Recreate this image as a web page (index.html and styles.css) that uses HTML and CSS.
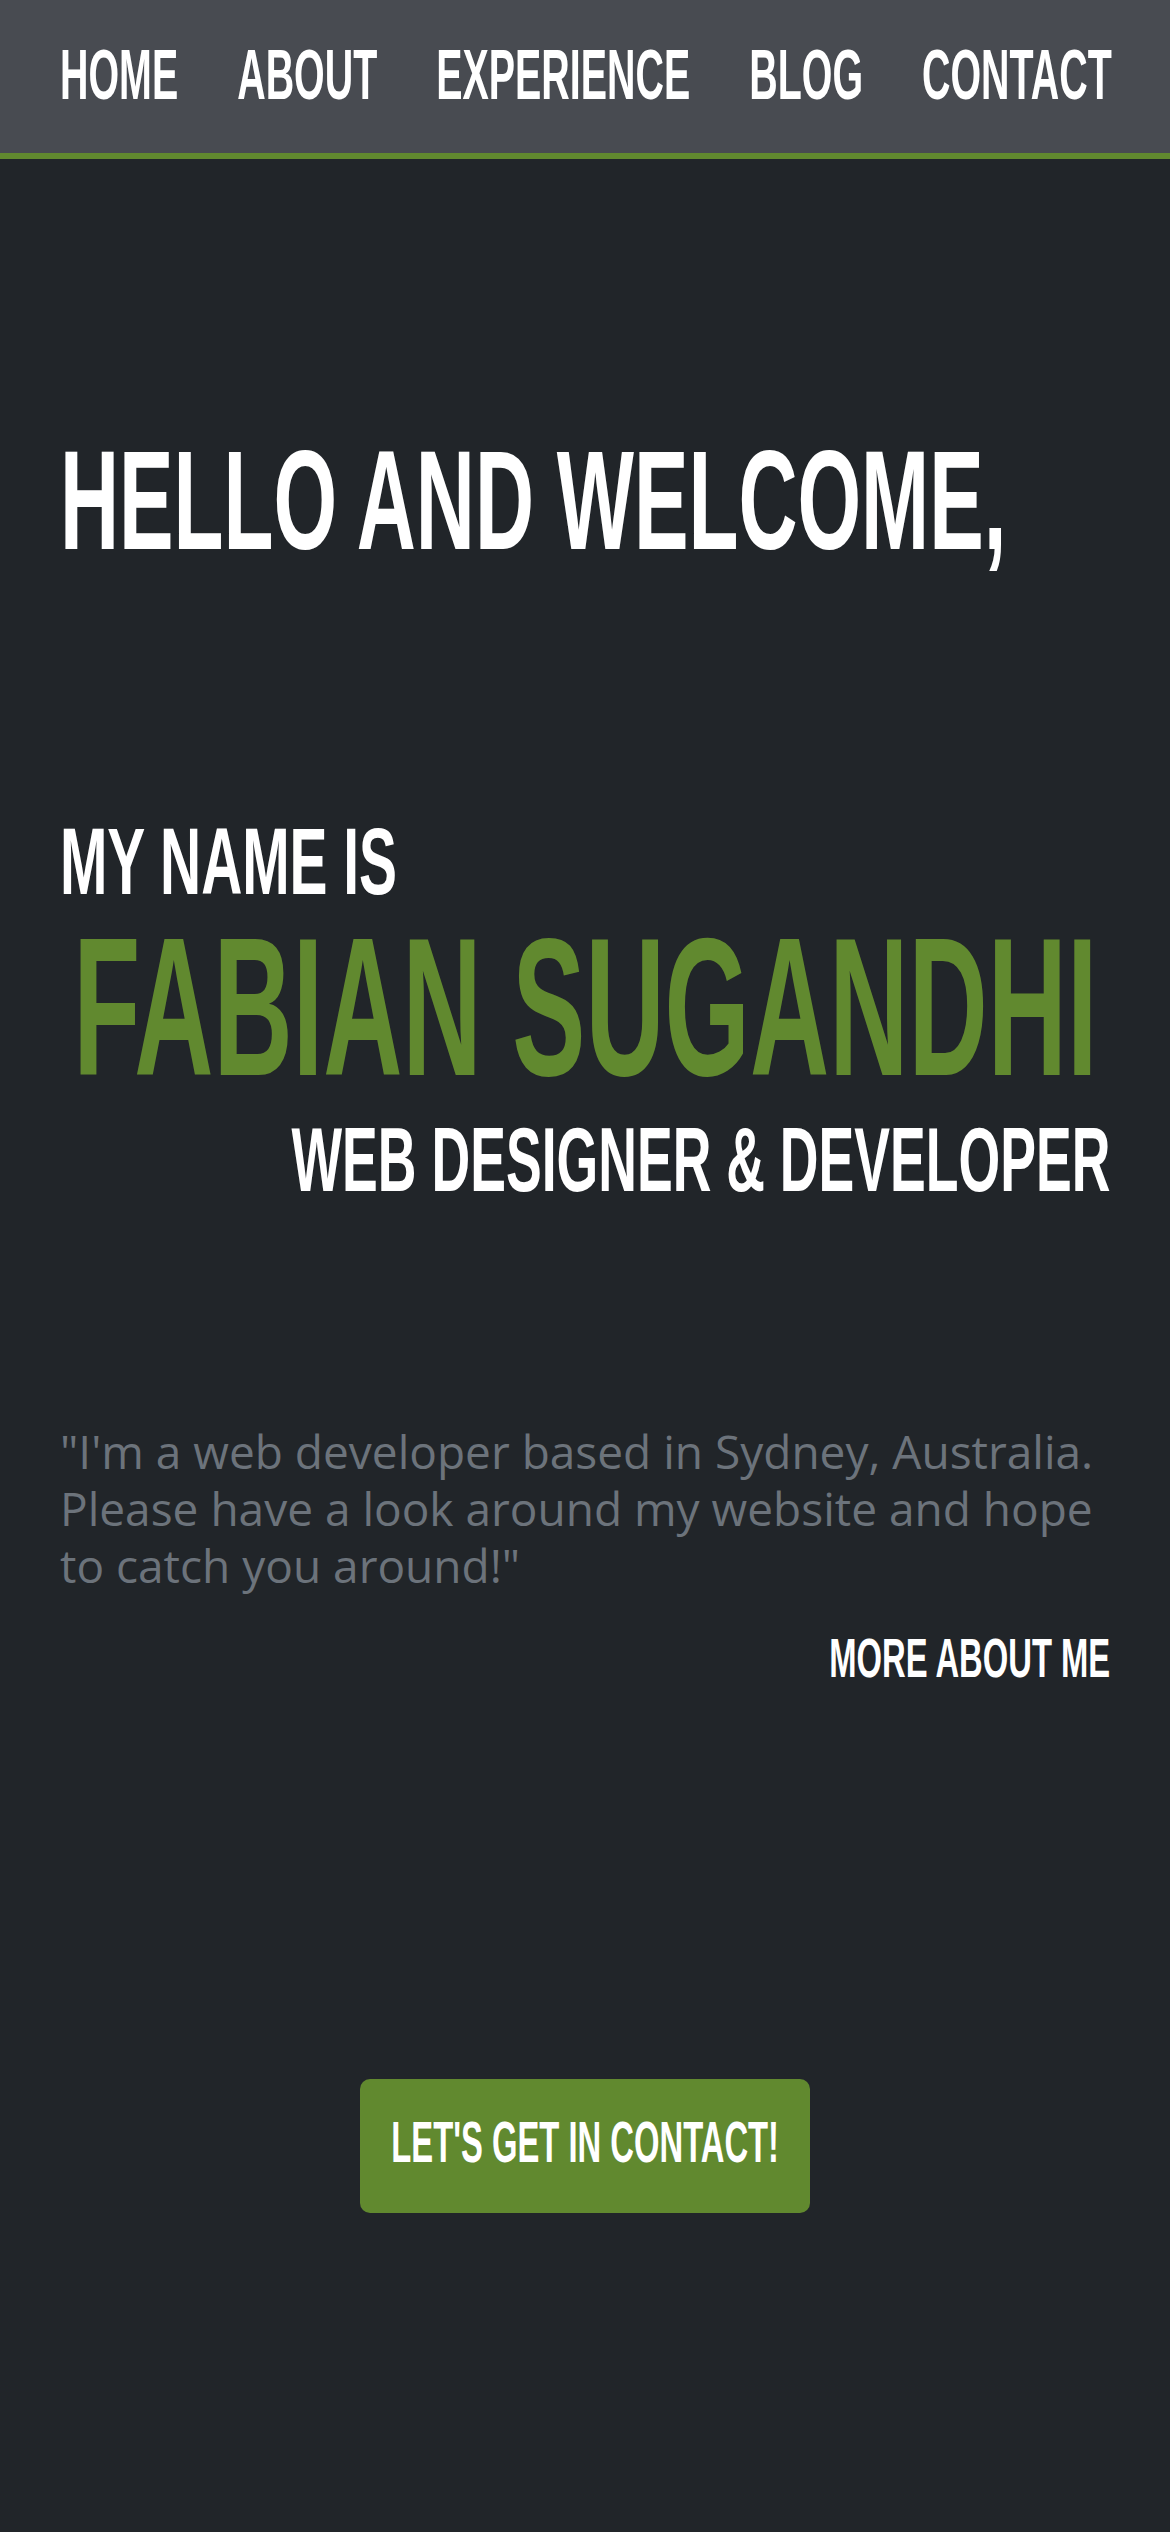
FILE: index.html
```html
<!DOCTYPE html>
<html lang="en">
  <head>
    <meta charset="UTF-8" />
    <meta name="viewport" content="width=device-width, initial-scale=1.0" />
    <title>Fabian Sugandhi</title>
    <link rel="stylesheet" href="styles.css">
  </head>
  <body>
    <header class="topnav">
      <nav class="nav-row">
        <a href="#" class="nav-link">HOME</a>
        <a href="#" class="nav-link">ABOUT</a>
        <a href="#" class="nav-link">EXPERIENCE</a>
        <a href="#" class="nav-link">BLOG</a>
        <a href="#" class="nav-link">CONTACT</a>
      </nav>
    </header>
    <main class="hero">
      <h1 class="hello"><span>HELLO AND WELCOME,</span></h1>
      <h2 class="intro"><span>MY NAME IS</span></h2>
      <h1 class="name"><span>FABIAN SUGANDHI</span></h1>
      <h2 class="role"><span>WEB DESIGNER &amp; DEVELOPER</span></h2>
      <p class="quote">"I'm a web developer based in Sydney, Australia. Please have a look around my website and hope to catch you around!"</p>
      <div class="more">
        <a href="#" class="more-link">MORE ABOUT ME</a>
      </div>
      <div class="cta">
        <a href="#" class="cta-btn"><span>LET'S GET IN CONTACT!</span></a>
      </div>
    </main>
  </body>
</html>
```

FILE: styles.css
```css
html,
body {
  overflow-x: hidden;
}
body {
  margin: 0;
  min-height: 2532px;
  background-color: #212529;
  color: white;
  font-family: "Liberation Sans", Arial, sans-serif;
}
a {
  color: white;
  text-decoration: none;
}

/* top bar */
.topnav {
  height: 149px;
  padding: 0 0 4px 60px;
  overflow: hidden;
  display: flex;
  align-items: center;
  background-color: #484b51;
  border-bottom: 6px solid #61892f;
}
.nav-row {
  display: flex;
  justify-content: space-between;
  flex-shrink: 0;
  width: 1895px;
  transform: scaleX(0.555);
  transform-origin: left center;
}
.nav-link {
  font-size: 71px;
  font-weight: 700;
  line-height: 1;
  white-space: nowrap;
}

/* hero */
.hero {
  display: flex;
  flex-direction: column;
  padding: 0 60px;
}
.hero h1,
.hero h2 {
  display: flex;
  margin: 0;
  font-weight: 700;
  line-height: 1;
}
.hero h1 > span,
.hero h2 > span {
  flex-shrink: 0;
  white-space: nowrap;
}
.hello {
  margin-top: 271px !important;
  font-size: 141px;
}
.hello > span {
  transform: scaleX(0.58);
  transform-origin: left center;
}
.intro {
  margin-top: 244px !important;
  font-size: 94px;
}
.intro > span {
  transform: scaleX(0.605);
  transform-origin: left center;
}
.name {
  margin-top: 0 !important;
  font-size: 197px;
  color: #61892f;
  justify-content: center;
}
.name > span {
  transform: scaleX(0.557);
  transform-origin: center;
}
.role {
  margin-top: 8px !important;
  font-size: 91px;
  justify-content: flex-end;
}
.role > span {
  transform: scaleX(0.589);
  transform-origin: right center;
}
.quote {
  margin: 218px 0 0 0;
  font-family: "Open Sans", sans-serif;
  font-weight: 400;
  font-size: 46px;
  line-height: 57px;
  color: #6c737b;
}
.more {
  display: flex;
  justify-content: flex-end;
  margin-top: 36px;
}
.more-link {
  flex-shrink: 0;
  font-size: 56px;
  font-weight: 700;
  line-height: 1;
  white-space: nowrap;
  transform: scaleX(0.585);
  transform-origin: right center;
}

/* call to action */
.cta {
  display: flex;
  justify-content: center;
  margin-top: 393px;
}
.cta-btn {
  display: flex;
  align-items: center;
  justify-content: center;
  width: 450px;
  height: 134px;
  padding-bottom: 7px;
  box-sizing: border-box;
  background-color: #61892f;
  border-radius: 10px;
}
.cta-btn > span {
  flex-shrink: 0;
  font-size: 57px;
  font-weight: 700;
  line-height: 1;
  white-space: nowrap;
  transform: scaleX(0.575);
}
```
